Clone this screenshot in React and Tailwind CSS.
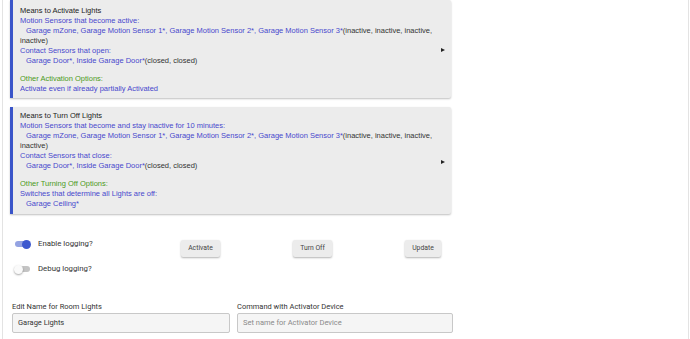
const blue = 'text-[#4848cc]'
const green = 'text-[#4b9a22]'

function Panel({ title, children, top }) {
  return (
    <div className={`ml-[7px] w-[441px] bg-[#ececec] border-l-[3px] border-[#3a55c9] shadow-[0_1px_2px_rgba(0,0,0,0.25)] rounded-r-[2px] relative pl-[7px] pr-[18px] ${top}`}>
      <div className="text-[7.5px] leading-[10px] text-[#333] font-['Liberation_Sans',Arial,sans-serif]">
        <div className="text-[#222]">{title}</div>
        {children}
      </div>
      <span className="absolute right-[6px] top-1/2 -translate-y-[1px] w-0 h-0 border-y-[2.5px] border-y-transparent border-l-[4px] border-l-[#222]" />
    </div>
  )
}

function Toggle({ on, label }) {
  return (
    <div className="flex items-center h-[14px]">
      <div className="relative w-[17px] h-[9px]">
        <div className={`absolute left-[1px] top-[1.5px] w-[15px] h-[6px] rounded-full ${on ? 'bg-[#94a3e2]' : 'bg-[#c4c4c4]'}`} />
        <div className={`absolute top-0 w-[9px] h-[9px] rounded-full ${on ? 'left-[8px] bg-[#3d59cf]' : 'left-0 bg-[#fafafa] shadow-[0_1px_2px_rgba(0,0,0,0.35)]'}`} />
      </div>
      <span className="ml-[7px] text-[7.8px] text-[#333] font-['Roboto',sans-serif]">{label}</span>
    </div>
  )
}

function Btn({ children, w }) {
  return (
    <button className={`h-[17px] ${w} bg-[#ececec] rounded-[2px] shadow-[0_1px_2px_rgba(0,0,0,0.3)] text-[6.8px] text-[#444] font-['Roboto',sans-serif]`}>
      {children}
    </button>
  )
}

export default function App() {
  return (
    <div className="w-[690px] h-[339px] overflow-hidden bg-white">
      <div className="ml-[2px] w-[687px] h-[339px] border-l border-r border-[#e3e3e3]">
        <Panel title="Means to Activate Lights" top="pt-[6px] pb-[4px]">
          <div className={blue}>Motion Sensors that become active:</div>
          <div>
            <span className={`${blue} pl-[6px]`}>Garage mZone, Garage Motion Sensor 1*, Garage Motion Sensor 2*, Garage Motion Sensor 3*</span>
            (inactive, inactive, inactive, inactive)
          </div>
          <div className={blue}>Contact Sensors that open:</div>
          <div>
            <span className={`${blue} pl-[6px]`}>Garage Door*, Inside Garage Door*</span>
            (closed, closed)
          </div>
          <div className="h-[8px]" />
          <div className={green}>Other Activation Options:</div>
          <div className={blue}>Activate even if already partially Activated</div>
        </Panel>

        <Panel title="Means to Turn Off Lights" top="mt-[9px] pt-[4px] pb-[5px]">
          <div className={blue}>Motion Sensors that become and stay inactive for 10 minutes:</div>
          <div>
            <span className={`${blue} pl-[6px]`}>Garage mZone, Garage Motion Sensor 1*, Garage Motion Sensor 2*, Garage Motion Sensor 3*</span>
            (inactive, inactive, inactive, inactive)
          </div>
          <div className={blue}>Contact Sensors that close:</div>
          <div>
            <span className={`${blue} pl-[6px]`}>Garage Door*, Inside Garage Door*</span>
            (closed, closed)
          </div>
          <div className="h-[8px]" />
          <div className={green}>Other Turning Off Options:</div>
          <div className={blue}>Switches that determine all Lights are off:</div>
          <div className={`${blue} pl-[6px]`}>Garage Ceiling*</div>
        </Panel>

        <div className="flex items-start mt-[23px]">
          <div className="ml-[11px] w-[167px] flex flex-col gap-[11px]">
            <Toggle on label="Enable logging?" />
            <Toggle label="Debug logging?" />
          </div>
          <div className="flex gap-[73px] mt-[3px]">
            <Btn w="w-[39px]">Activate</Btn>
            <Btn w="w-[39px]">Turn Off</Btn>
            <Btn w="w-[36px]">Update</Btn>
          </div>
        </div>

        <div className="flex mt-[26px] ml-[9px] gap-[7px] font-['Roboto',sans-serif]">
          <div className="w-[218px]">
            <div className="text-[7.5px] leading-[10px] text-[#333] mb-[1px]">Edit Name for Room Lights</div>
            <div className="h-[20px] border border-[#c8c8c8] bg-[#f5f5f5] rounded-[2px] flex items-center px-[5px] text-[7.5px] text-[#333]">Garage Lights</div>
          </div>
          <div className="w-[216px]">
            <div className="text-[7.5px] leading-[10px] text-[#333] mb-[1px]">Command with Activator Device</div>
            <div className="h-[20px] border border-[#c8c8c8] bg-[#f5f5f5] rounded-[2px] flex items-center px-[5px] text-[7.5px] text-[#8a8a8a]">Set name for Activator Device</div>
          </div>
        </div>
      </div>
    </div>
  )
}
